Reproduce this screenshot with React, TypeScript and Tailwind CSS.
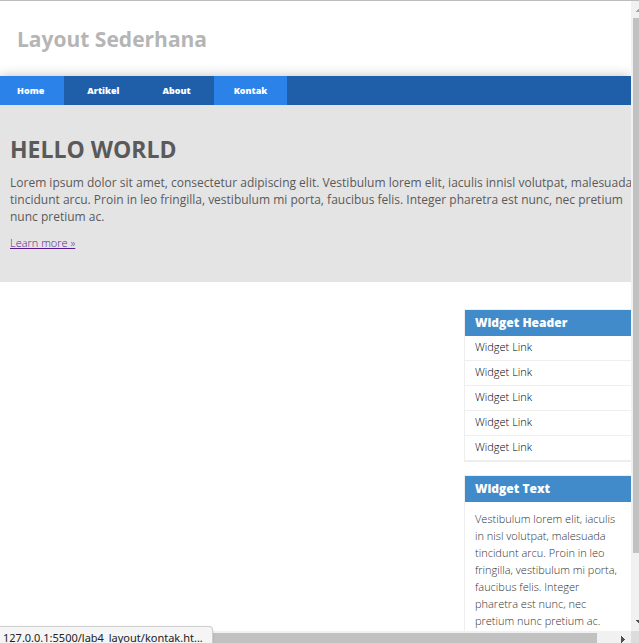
const links = [
  { label: "Home", style: "bg-[#2b83ea] pr-5 pl-[17px]" },
  { label: "Artikel", style: "px-5" },
  { label: "About", style: "px-5" },
  { label: "Kontak", style: "bg-[#2b83ea] px-5" },
];

const widgetLinks = [1, 2, 3, 4, 5];

function Scrollbars() {
  return (
    <>
      <div aria-hidden="true" className="relative col-start-2 row-start-1 overflow-hidden bg-[#f1f1f1] pt-[17px] pb-[78px] pl-0.5">
        <svg className="absolute top-2 left-[5px] h-[3px] w-[7px] fill-[#a3a3a3]" viewBox="0 0 7 3" shapeRendering="crispEdges">
          <path d="M0 3V2H1V1H2V0H5V1H6V2H7V3Z" />
        </svg>
        <div className="h-full bg-[#c1c1c1]" />
        <svg className="absolute bottom-2 left-[5px] h-[3px] w-[7px] fill-[#505050]" viewBox="0 0 7 3" shapeRendering="crispEdges">
          <path d="M0 0V1H1V2H2V3H5V2H6V1H7V0Z" />
        </svg>
      </div>
      <div aria-hidden="true" className="relative col-start-1 row-start-2 bg-[#f1f1f1] pt-0.5 pr-[34px]">
        <div className="h-full bg-[#c1c1c1]" />
        <svg className="absolute right-[6px] bottom-0 h-[7px] w-1 fill-[#505050]" viewBox="0 0 4 7" shapeRendering="crispEdges">
          <path d="M0 0H1V1H2V2H3V3H4V4H3V5H2V6H1V7H0Z" />
        </svg>
      </div>
      <div aria-hidden="true" className="col-start-2 row-start-2 bg-[#dcdcdc]" />
    </>
  );
}

export default function App() {
  return (
    <div className="relative grid h-screen grid-cols-[minmax(0,1fr)_8px] grid-rows-[minmax(0,1fr)_12px] overflow-hidden border-t border-[#bdbdbd] bg-white font-['Open_Sans',sans-serif] text-[11px] text-[#5a5a5a]">
      <div className="col-start-1 row-start-1 overflow-hidden">
        <header className="px-[17px] pt-5 pb-[19px]">
          <h1 className="text-[21px] leading-9 font-bold text-[#b5b5b5]">Layout Sederhana</h1>
        </header>
        <nav className="flex gap-[3px] bg-[#1f5faa] text-[9px] leading-[29px] font-extrabold text-white shadow-[0_0_12px_rgba(0,0,0,0.25)]">
          {links.map((link) => (
            <a key={link.label} href="#" className={link.style}>
              {link.label}
            </a>
          ))}
        </nav>
        <section className="relative bg-[#e4e4e4] pt-7 pb-[31px] pl-[10px]">
          <h2 className="text-[23px] leading-8 font-bold">HELLO WORLD</h2>
          <p className="-mr-1 mt-[9px] text-[12px] leading-[17px]">
            Lorem ipsum dolor sit amet, consectetur adipiscing elit. Vestibulum lorem elit, iaculis innisl volutpat, malesuada tincidunt arcu. Proin in leo fringilla, vestibulum mi porta, faucibus felis. Integer pharetra est nunc, nec pretium nunc pretium ac.
          </p>
          <div className="mt-[10px] flex">
            <a href="#" className="leading-4 font-light text-[#551a8b] underline">
              Learn more »
            </a>
          </div>
        </section>
        <div className="flex justify-end pt-[27px]">
          <aside className="-mr-3 w-[179px] shrink-0">
            <section className="mb-[13px] border border-[#eeeeee]">
              <h3 className="bg-[#428bca] px-[10px] text-[12px] leading-[26px] font-extrabold text-white">Widget Header</h3>
              <ul>
                {widgetLinks.map((n) => (
                  <li key={n} className="border-b border-[#eeeeee]">
                    <a href="#" className="block px-[10px] pb-0.5 leading-[22px] font-light text-black">
                      Widget Link
                    </a>
                  </li>
                ))}
              </ul>
            </section>
            <section className="border border-[#eeeeee]">
              <h3 className="bg-[#428bca] px-[10px] text-[12px] leading-[26px] font-extrabold text-white">Widget Text</h3>
              <p className="py-2 pr-5 pl-[10px] leading-[17px] font-light text-[#333333]">
                Vestibulum lorem elit, iaculis in nisl volutpat, malesuada tincidunt arcu. Proin in leo fringilla, vestibulum mi porta, faucibus felis. Integer pharetra est nunc, nec pretium nunc pretium ac.
              </p>
            </section>
          </aside>
        </div>
      </div>
      <Scrollbars />
      <div className="absolute bottom-0 left-0 h-[17px] w-[213px] rounded-tr border-t border-r border-[#cfcfcf] bg-[#f5f5f5] pt-[3px] pl-[3px] font-['Noto_Sans',sans-serif] text-[11px] leading-4 whitespace-nowrap text-[#222222] shadow-sm">
        127.0.0.1:5500/lab4_layout/kontak.ht...
      </div>
    </div>
  );
}
